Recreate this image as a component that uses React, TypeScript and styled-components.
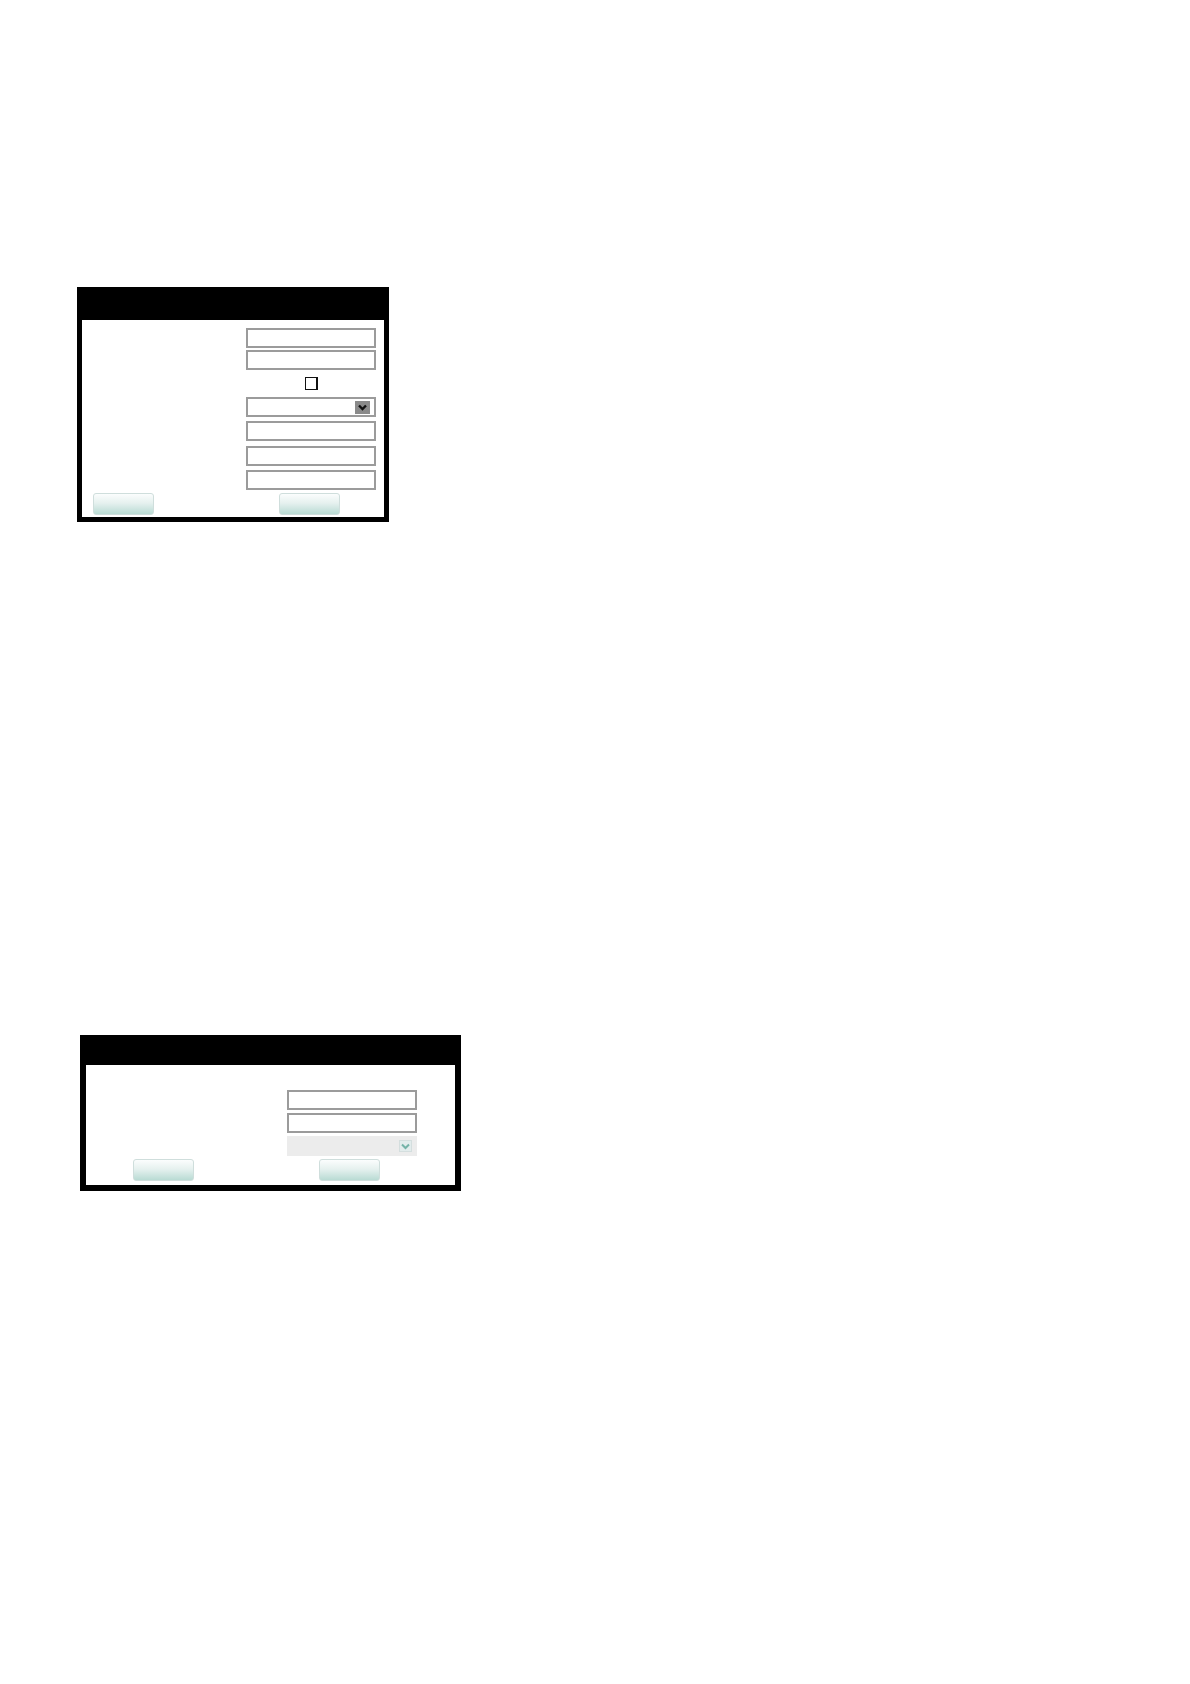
import React from 'react';
import styled, { createGlobalStyle } from 'styled-components';

const GlobalStyle = createGlobalStyle`
  html, body {
    margin: 0;
    padding: 0;
    background: #ffffff;
    font-family: "Liberation Sans", Arial, sans-serif;
  }
`;

const Page = styled.div`
  width: 1190px;
  min-height: 1684px;
  padding: 287px 0 0 77px;
  box-sizing: border-box;
  display: flex;
  flex-direction: column;
  align-items: flex-start;
`;

// Ventana con marco negro grueso
const Dialog = styled.div<{ $w: number; $border: number; $offsetTop?: number; $offsetLeft?: number }>`
  width: ${(p) => p.$w}px;
  box-sizing: border-box;
  background: #000;
  padding: 0 ${(p) => p.$border}px ${(p) => p.$border}px;
  margin-top: ${(p) => p.$offsetTop || 0}px;
  margin-left: ${(p) => p.$offsetLeft || 0}px;
  display: flex;
  flex-direction: column;
`;

const TitleBar = styled.div<{ $h: number }>`
  height: ${(p) => p.$h}px;
  color: #fff;
  font-size: 13px;
`;

const Body = styled.div<{ $padTop: number; $padBottom: number }>`
  background: #fff;
  padding-top: ${(p) => p.$padTop}px;
  padding-bottom: ${(p) => p.$padBottom}px;
  display: flex;
  flex-direction: column;
`;

const FieldRow = styled.div<{ $labelW: number; $gap?: number }>`
  display: grid;
  grid-template-columns: ${(p) => p.$labelW}px 130px;
  margin-top: ${(p) => p.$gap || 0}px;
`;

const Label = styled.div`
  font-size: 12px;
  color: #000;
`;

const TextBox = styled.div`
  height: 20px;
  box-sizing: border-box;
  border: 2px solid #9b9b9b;
  background: #fff;
`;

const CheckCell = styled.div`
  height: 13px;
  display: flex;
  justify-content: center;
`;

const CheckBox = styled.div`
  width: 13px;
  height: 13px;
  box-sizing: border-box;
  border: 1.5px solid #111;
  border-right-width: 2px;
  background: #fff;
`;

const Select = styled.div<{ $disabled?: boolean }>`
  height: 20px;
  box-sizing: border-box;
  border: 2px solid ${(p) => (p.$disabled ? '#ececec' : '#9b9b9b')};
  background: ${(p) => (p.$disabled ? '#ececec' : '#fff')};
  display: flex;
  align-items: center;
  justify-content: flex-end;
  padding-right: ${(p) => (p.$disabled ? 3 : 4)}px;
`;

const DropButton = styled.div<{ $disabled?: boolean }>`
  width: ${(p) => (p.$disabled ? 13 : 15)}px;
  height: ${(p) => (p.$disabled ? 12 : 13)}px;
  background: ${(p) => (p.$disabled ? '#e2ecec' : '#8a8a8a')};
  border: ${(p) => (p.$disabled ? '1px solid #d4dede' : 'none')};
  box-sizing: border-box;
  display: flex;
  align-items: center;
  justify-content: center;
`;

const ButtonRow = styled.div<{ $padLeft: number; $gap: number }>`
  display: flex;
  gap: ${(p) => p.$gap}px;
  padding-left: ${(p) => p.$padLeft}px;
  margin-top: 3px;
`;

const Button = styled.button`
  width: 61px;
  height: 22px;
  box-sizing: border-box;
  border: 1px solid #cfdedc;
  border-radius: 3px;
  background: linear-gradient(to bottom, #fbfdfd 0%, #e6f1ef 45%, #b9dbd4 100%);
  padding: 0;
  font-family: "Liberation Sans", Arial, sans-serif;
  font-size: 11px;
`;

const Chevron: React.FC<{ color: string; weight: number }> = ({ color, weight }) => (
  <svg width="9" height="7" viewBox="0 0 9 7">
    <path d="M1 1.5 L4.5 5 L8 1.5" fill="none" stroke={color} strokeWidth={weight} />
  </svg>
);

const App: React.FC = () => {
  return (
    <>
      <GlobalStyle />
      <Page>
        <Dialog $w={312} $border={5}>
          <TitleBar $h={33} />
          <Body $padTop={8} $padBottom={2}>
            <FieldRow $labelW={164}>
              <Label />
              <TextBox />
            </FieldRow>
            <FieldRow $labelW={164} $gap={2}>
              <Label />
              <TextBox />
            </FieldRow>
            <FieldRow $labelW={164} $gap={7}>
              <Label />
              <CheckCell>
                <CheckBox />
              </CheckCell>
            </FieldRow>
            <FieldRow $labelW={164} $gap={7}>
              <Label />
              <Select>
                <DropButton>
                  <Chevron color="#111" weight={2.4} />
                </DropButton>
              </Select>
            </FieldRow>
            <FieldRow $labelW={164} $gap={4}>
              <Label />
              <TextBox />
            </FieldRow>
            <FieldRow $labelW={164} $gap={5}>
              <Label />
              <TextBox />
            </FieldRow>
            <FieldRow $labelW={164} $gap={4}>
              <Label />
              <TextBox />
            </FieldRow>
            <ButtonRow $padLeft={11} $gap={125}>
              <Button />
              <Button />
            </ButtonRow>
          </Body>
        </Dialog>

        <Dialog $w={381} $border={6} $offsetTop={513} $offsetLeft={3}>
          <TitleBar $h={30} />
          <Body $padTop={25} $padBottom={4}>
            <FieldRow $labelW={201}>
              <Label />
              <TextBox />
            </FieldRow>
            <FieldRow $labelW={201} $gap={3}>
              <Label />
              <TextBox />
            </FieldRow>
            <FieldRow $labelW={201} $gap={3}>
              <Label />
              <Select $disabled>
                <DropButton $disabled>
                  <Chevron color="#74b3a8" weight={2} />
                </DropButton>
              </Select>
            </FieldRow>
            <ButtonRow $padLeft={47} $gap={125}>
              <Button />
              <Button />
            </ButtonRow>
          </Body>
        </Dialog>
      </Page>
    </>
  );
};

export default App;
